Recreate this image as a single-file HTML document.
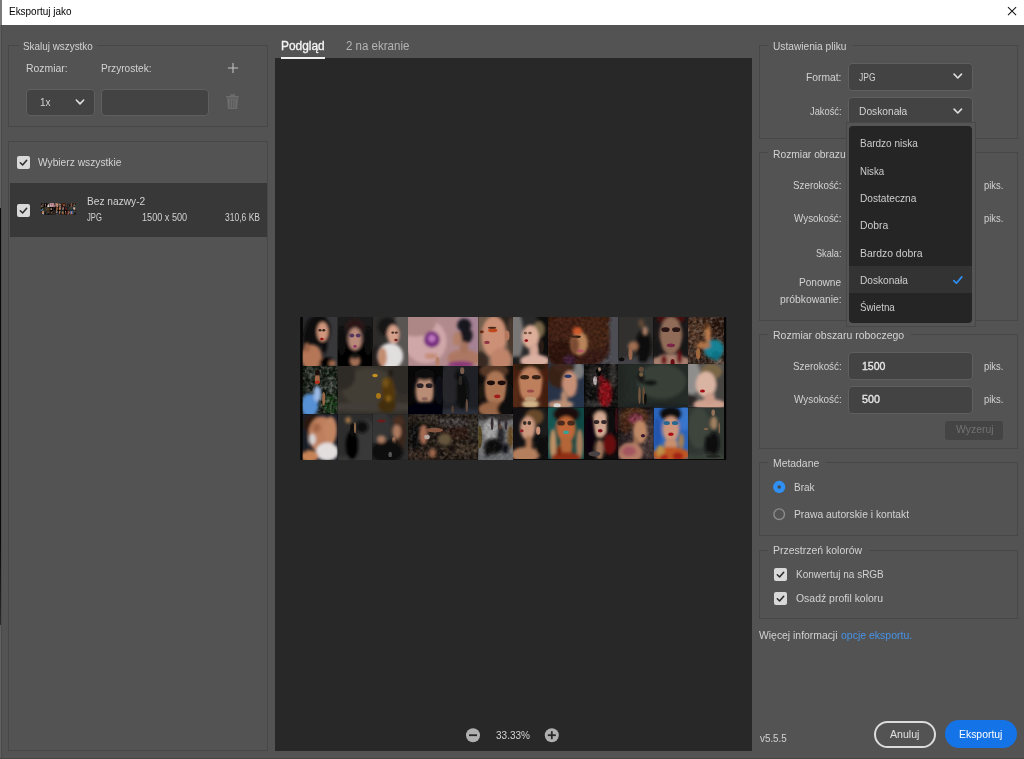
<!DOCTYPE html>
<html lang="pl">
<head>
<meta charset="utf-8">
<title>Eksportuj jako</title>
<style>
html,body{margin:0;padding:0;}
body{width:1024px;height:759px;overflow:hidden;background:#535353;position:relative;font-family:"Liberation Sans",sans-serif;}
.a{position:absolute;box-sizing:border-box;}
.t{position:absolute;white-space:pre;line-height:1;transform-origin:0 0;}
.sb{-webkit-text-stroke:0.35px currentColor;}
.fs{position:absolute;box-sizing:border-box;border:1px solid #474747;}
.gap{position:absolute;height:3px;background:#535353;}
.inp{position:absolute;box-sizing:border-box;background:#434343;border:1px solid #5f5f5f;border-radius:4px;}
.cb{position:absolute;width:13px;height:13px;background:#d9d9d9;border-radius:2px;}
.cb svg{position:absolute;left:0;top:0;}
svg{display:block;}
</style>
</head>
<body>
<!-- title bar -->
<div class="a" style="left:0;top:0;width:1024px;height:25px;background:#fff;"></div>
<div class="a" style="left:0;top:0;width:2px;height:25px;background:#7a7a7a;"></div>
<svg class="a" style="left:1004px;top:3px;" width="16" height="16" viewBox="0 0 16 16"><path d="M4 4.1 L12.1 12.2 M12.1 4.1 L4 12.2" stroke="#1a1a1a" stroke-width="1.1" fill="none"/></svg>
<!-- window edges -->
<div class="a" style="left:0;top:25px;width:1px;height:734px;background:#606060;"></div><div class="a" style="left:1px;top:25px;width:1px;height:734px;background:#4a4a4a;"></div>
<div class="a" style="left:0;top:208px;width:1px;height:417px;background:linear-gradient(#0a0a0a 0,#0a0a0a 80%,#2a2c28 100%);"></div>
<div class="a" style="left:0;top:758px;width:1024px;height:1px;background:#464646;"></div>

<!-- LEFT: Skaluj wszystko -->
<div class="fs" style="left:8px;top:45px;width:260px;height:82px;"></div>
<div class="gap" style="left:19px;top:44px;width:78px;"></div>
<svg class="a" style="left:227px;top:62px;" width="12" height="12" viewBox="0 0 12 12"><path d="M6 0.9 V11.1 M0.9 6 H11.1" stroke="#c4c4c4" stroke-width="1.05" fill="none"/></svg>
<div class="inp" style="left:26px;top:89px;width:69px;height:27px;"></div>
<svg class="a" style="left:74px;top:97px;" width="12" height="10" viewBox="0 0 12 10"><path d="M2.3 3 L6 6.9 L9.7 3" stroke="#dedede" stroke-width="1.6" fill="none" stroke-linecap="round" stroke-linejoin="round"/></svg>
<div class="inp" style="left:101px;top:89px;width:108px;height:27px;"></div>
<!-- trash -->
<svg class="a" style="left:225px;top:94px;" width="15" height="16" viewBox="0 0 15 16"><path d="M5.2 0.2h4.8v1.9h3.8v1.6H1.1V2.1h4.1z" fill="#6c6c6c"/><path d="M2 4.5h11.1l-1 10.4H3z" fill="#6c6c6c"/><path d="M5.3 5.6v8.4M7.55 5.6v8.4M9.8 5.6v8.4" stroke="#575757" stroke-width="0.8"/></svg>

<!-- LEFT: list -->
<div class="fs" style="left:8px;top:141px;width:260px;height:610px;"></div>
<div class="a" style="left:9.5px;top:183px;width:257px;height:54px;background:#383838;"></div>
<div class="cb" style="left:17px;top:156px;"><svg width="13" height="13" viewBox="0 0 13 13"><path d="M3.3 6.7 L5.6 9 L9.7 4.3" stroke="#2c2c2c" stroke-width="1.55" fill="none" stroke-linecap="round" stroke-linejoin="round"/></svg></div>
<div class="cb" style="left:17px;top:204px;"><svg width="13" height="13" viewBox="0 0 13 13"><path d="M3.3 6.7 L5.6 9 L9.7 4.3" stroke="#2c2c2c" stroke-width="1.55" fill="none" stroke-linecap="round" stroke-linejoin="round"/></svg></div>
<!-- thumbnail -->
<svg class="a" style="left:41px;top:203.3px;" width="35" height="11.6" viewBox="300.2 317 426 142.9" preserveAspectRatio="none"><use href="#cg"/></svg>

<!-- CENTER: preview -->
<div class="a" style="left:281px;top:57px;width:44px;height:2px;background:#f0f0f0;"></div>
<div class="a" style="left:275px;top:58px;width:477px;height:693px;background:#282828;"></div>
<div class="a" style="left:281px;top:57px;width:44px;height:2px;background:#f0f0f0;"></div>
<svg class="a" style="left:300px;top:316px;" width="428" height="146" viewBox="300 316 428 146">
<defs><filter id="bl" x="-20%" y="-20%" width="140%" height="140%"><feGaussianBlur stdDeviation="1.5"/></filter><filter id="bs" x="-20%" y="-20%" width="140%" height="140%"><feGaussianBlur stdDeviation="0.7"/></filter><filter id="tx" x="0" y="0" width="100%" height="100%"><feTurbulence type="fractalNoise" baseFrequency="0.32" numOctaves="2" seed="7"/><feColorMatrix type="matrix" values="0 0 0 0 0  0 0 0 0 0  0 0 0 0 0  2.6 0 0 0 -0.95"/></filter><filter id="tw" x="0" y="0" width="100%" height="100%"><feTurbulence type="fractalNoise" baseFrequency="0.3" numOctaves="2" seed="3"/><feColorMatrix type="matrix" values="0 0 0 0 1  0 0 0 0 0.9  0 0 0 0 0.8  0 2.4 0 0 -1.0"/></filter>
<clipPath id="c0"><rect x="302.6" y="317.0" width="35.1" height="48.9"/></clipPath>
<clipPath id="c1"><rect x="337.7" y="317.0" width="34.7" height="48.9"/></clipPath>
<clipPath id="c2"><rect x="372.4" y="317.0" width="35.7" height="48.9"/></clipPath>
<clipPath id="c3"><rect x="408.1" y="317.0" width="70.1" height="48.9"/></clipPath>
<clipPath id="c4"><rect x="478.2" y="317.0" width="34.8" height="48.9"/></clipPath>
<clipPath id="c5"><rect x="513.0" y="317.0" width="35.0" height="47.1"/></clipPath>
<clipPath id="c6"><rect x="548.0" y="317.0" width="70.1" height="47.1"/></clipPath>
<clipPath id="c7"><rect x="618.1" y="317.0" width="35.5" height="47.1"/></clipPath>
<clipPath id="c8"><rect x="653.6" y="317.0" width="34.5" height="47.1"/></clipPath>
<clipPath id="c9"><rect x="688.1" y="317.0" width="35.9" height="47.1"/></clipPath>
<clipPath id="c10"><rect x="302.6" y="365.9" width="35.1" height="48.2"/></clipPath>
<clipPath id="c11"><rect x="337.7" y="365.9" width="70.4" height="48.2"/></clipPath>
<clipPath id="c12"><rect x="408.1" y="365.9" width="34.5" height="48.2"/></clipPath>
<clipPath id="c13"><rect x="442.6" y="365.9" width="35.6" height="48.2"/></clipPath>
<clipPath id="c14"><rect x="478.2" y="365.9" width="34.8" height="48.2"/></clipPath>
<clipPath id="c15"><rect x="513.0" y="364.1" width="35.0" height="43.5"/></clipPath>
<clipPath id="c16"><rect x="548.0" y="364.1" width="36.3" height="43.5"/></clipPath>
<clipPath id="c17"><rect x="584.3" y="364.1" width="33.8" height="43.5"/></clipPath>
<clipPath id="c18"><rect x="618.1" y="364.1" width="70.0" height="43.5"/></clipPath>
<clipPath id="c19"><rect x="688.1" y="364.1" width="35.9" height="43.5"/></clipPath>
<clipPath id="c20"><rect x="302.6" y="414.1" width="35.1" height="45.8"/></clipPath>
<clipPath id="c21"><rect x="337.7" y="414.1" width="34.7" height="45.8"/></clipPath>
<clipPath id="c22"><rect x="372.4" y="414.1" width="35.7" height="45.8"/></clipPath>
<clipPath id="c23"><rect x="408.1" y="414.1" width="70.1" height="45.8"/></clipPath>
<clipPath id="c24"><rect x="478.2" y="414.1" width="34.8" height="45.8"/></clipPath>
<clipPath id="c25"><rect x="513.0" y="407.6" width="35.0" height="51.3"/></clipPath>
<clipPath id="c26"><rect x="548.0" y="407.6" width="36.3" height="51.3"/></clipPath>
<clipPath id="c27"><rect x="584.3" y="407.6" width="33.8" height="51.3"/></clipPath>
<clipPath id="c28"><rect x="618.1" y="407.6" width="35.5" height="51.3"/></clipPath>
<clipPath id="c29"><rect x="653.6" y="407.6" width="34.5" height="51.3"/></clipPath>
<clipPath id="c30"><rect x="688.1" y="407.6" width="35.9" height="51.3"/></clipPath>
</defs>
<g id="cg">
<rect x="300.2" y="317" width="426" height="142.9" fill="#050505"/>
<g clip-path="url(#c0)"><rect x="302.6" y="317.0" width="35.1" height="48.9" fill="#28282a"/>
<g filter="url(#bl)">
<ellipse cx="335.9" cy="341.4" rx="12.3" ry="34.2" fill="#38383b"/>
<ellipse cx="318.4" cy="330.2" rx="12.6" ry="15.6" fill="#0b090a"/>
<ellipse cx="307.9" cy="341.4" rx="4.9" ry="15.6" fill="#0b0a0b"/>
<ellipse cx="324.4" cy="343.9" rx="3.5" ry="9.8" fill="#0c0b0b"/>
<ellipse cx="322.6" cy="331.7" rx="5.6" ry="9.8" fill="#d0977d"/>
</g>
<g filter="url(#bs)">
<ellipse cx="321.9" cy="339.0" rx="1.8" ry="1.2" fill="#991411"/>
<ellipse cx="320.0" cy="330.2" rx="1.5" ry="1.2" fill="#382520"/>
<ellipse cx="323.8" cy="330.2" rx="1.5" ry="1.2" fill="#382520"/>
</g>
<g filter="url(#bl)">
<ellipse cx="311.4" cy="357.1" rx="10.5" ry="12.7" fill="#b47657"/>
<ellipse cx="306.8" cy="347.3" rx="3.2" ry="4.9" fill="#996246"/>
<ellipse cx="327.2" cy="362.5" rx="7.7" ry="4.9" fill="#060606"/>
<ellipse cx="332.4" cy="363.5" rx="3.5" ry="2.9" fill="#a26a4d"/>
</g>
</g>
<g clip-path="url(#c1)"><rect x="337.7" y="317.0" width="34.7" height="48.9" fill="#1c1b1b"/>
<g filter="url(#bl)">
<ellipse cx="355.0" cy="326.8" rx="9.4" ry="8.3" fill="#2a1914"/>
<ellipse cx="355.0" cy="358.6" rx="20.8" ry="17.6" fill="#060606"/>
<ellipse cx="341.9" cy="341.4" rx="4.9" ry="14.7" fill="#070707"/>
<ellipse cx="368.2" cy="341.4" rx="4.9" ry="14.7" fill="#070707"/>
<ellipse cx="355.0" cy="339.0" rx="6.9" ry="11.2" fill="#b98a79"/>
</g>
<g filter="url(#bs)">
<ellipse cx="351.8" cy="335.6" rx="2.5" ry="2.0" fill="#57385d"/>
<ellipse cx="358.3" cy="335.6" rx="2.5" ry="2.0" fill="#57385d"/>
<ellipse cx="355.0" cy="346.3" rx="1.7" ry="1.5" fill="#903766"/>
</g>
<g filter="url(#bl)">
<ellipse cx="355.0" cy="361.0" rx="5.6" ry="5.9" fill="#a26e55"/>
<ellipse cx="355.0" cy="356.1" rx="4.5" ry="2.9" fill="#141414"/>
</g>
</g>
<g clip-path="url(#c2)"><rect x="372.4" y="317.0" width="35.7" height="48.9" fill="#2d2c2b"/>
<g filter="url(#bl)">
<ellipse cx="408.1" cy="341.4" rx="16.1" ry="39.1" fill="#595552"/>
<ellipse cx="376.0" cy="361.0" rx="10.7" ry="14.7" fill="#201e1d"/>
<ellipse cx="387.4" cy="326.8" rx="9.6" ry="9.8" fill="#171514"/>
<ellipse cx="393.1" cy="334.6" rx="6.1" ry="9.8" fill="#d5a08a"/>
</g>
<g filter="url(#bs)">
<ellipse cx="396.0" cy="340.0" rx="1.8" ry="1.2" fill="#792828"/>
<ellipse cx="392.8" cy="332.6" rx="1.4" ry="1.2" fill="#482f28"/>
<ellipse cx="396.3" cy="332.6" rx="1.4" ry="1.2" fill="#482f28"/>
</g>
<g filter="url(#bl)">
<ellipse cx="390.2" cy="356.1" rx="12.9" ry="13.2" fill="#e1dede"/>
<ellipse cx="382.4" cy="357.1" rx="4.6" ry="9.8" fill="#c28c70"/>
</g>
</g>
<g clip-path="url(#c3)"><rect x="408.1" y="317.0" width="70.1" height="48.9" fill="#b18a8e"/>
<g filter="url(#bl)">
<ellipse cx="425.6" cy="341.4" rx="21.0" ry="22.0" fill="#d0a7a9"/>
<ellipse cx="471.2" cy="331.7" rx="14.0" ry="24.4" fill="#a58294"/>
<ellipse cx="415.1" cy="321.9" rx="21.0" ry="14.7" fill="#ad8686"/>
<ellipse cx="431.9" cy="339.5" rx="8.1" ry="8.3" fill="#76297e"/>
<ellipse cx="431.9" cy="338.5" rx="3.5" ry="3.4" fill="#bd78c1"/>
<ellipse cx="431.2" cy="356.1" rx="7.0" ry="2.9" fill="#c48c76"/>
</g>
<g filter="url(#bs)">
<ellipse cx="437.5" cy="362.0" rx="2.1" ry="4.9" fill="#b5806b"/>
</g>
<g filter="url(#bl)">
<ellipse cx="464.2" cy="325.3" rx="7.0" ry="6.8" fill="#19171d"/>
<ellipse cx="466.3" cy="335.6" rx="6.3" ry="7.8" fill="#17151b"/>
<ellipse cx="457.2" cy="339.0" rx="4.6" ry="7.3" fill="#b28069"/>
<ellipse cx="464.2" cy="358.1" rx="16.8" ry="8.8" fill="#ad7863"/>
<ellipse cx="464.2" cy="347.3" rx="4.2" ry="5.9" fill="#a5725b"/>
<ellipse cx="460.7" cy="364.4" rx="12.6" ry="3.4" fill="#8a3878"/>
</g>
</g>
<g clip-path="url(#c4)"><rect x="478.2" y="317.0" width="34.8" height="48.9" fill="#725d4c"/>
<g filter="url(#bl)">
<ellipse cx="506.0" cy="321.9" rx="12.2" ry="9.8" fill="#2a211c"/>
<ellipse cx="511.3" cy="336.6" rx="4.2" ry="19.6" fill="#48382d"/>
<ellipse cx="479.9" cy="361.0" rx="8.7" ry="9.8" fill="#382a21"/>
<ellipse cx="493.9" cy="336.6" rx="12.5" ry="20.5" fill="#cc9076"/>
<ellipse cx="500.8" cy="360.0" rx="10.4" ry="12.2" fill="#bf846a"/>
</g>
<g filter="url(#bs)">
<ellipse cx="492.8" cy="330.2" rx="4.5" ry="2.0" fill="#be4a1b"/>
<ellipse cx="492.1" cy="327.8" rx="4.2" ry="1.0" fill="#482a1c"/>
<ellipse cx="481.7" cy="331.7" rx="2.1" ry="1.5" fill="#682c14"/>
<ellipse cx="486.9" cy="342.4" rx="2.8" ry="1.7" fill="#903746"/>
<ellipse cx="507.1" cy="335.6" rx="2.4" ry="4.9" fill="#b4765d"/>
</g>
</g>
<g clip-path="url(#c5)"><rect x="513.0" y="317.0" width="35.0" height="47.1" fill="#2a2a2a"/>
<g filter="url(#bl)">
<ellipse cx="513.0" cy="335.8" rx="10.5" ry="28.3" fill="#797676"/>
<ellipse cx="546.2" cy="335.8" rx="10.5" ry="33.0" fill="#0e0e0e"/>
<ellipse cx="516.5" cy="363.2" rx="10.5" ry="7.1" fill="#1c1c1c"/>
<ellipse cx="538.5" cy="329.7" rx="5.6" ry="8.0" fill="#796848"/>
<ellipse cx="530.5" cy="336.8" rx="8.4" ry="11.8" fill="#dcae99"/>
</g>
<g filter="url(#bs)">
<ellipse cx="526.3" cy="340.6" rx="1.8" ry="1.4" fill="#900e14"/>
<ellipse cx="525.4" cy="333.0" rx="1.8" ry="1.2" fill="#795746"/>
<ellipse cx="530.0" cy="333.0" rx="1.8" ry="1.2" fill="#795746"/>
</g>
<g filter="url(#bl)">
<ellipse cx="534.0" cy="350.9" rx="4.9" ry="7.5" fill="#d5a797"/>
<ellipse cx="534.7" cy="360.8" rx="14.7" ry="6.6" fill="#dab0a2"/>
</g>
<g filter="url(#bs)">
<ellipse cx="541.7" cy="346.2" rx="2.1" ry="7.1" fill="#2a1e14"/>
</g>
</g>
<g clip-path="url(#c6)"><rect x="548.0" y="317.0" width="70.1" height="47.1" fill="#4e4e55"/>
<g filter="url(#bl)">
<ellipse cx="555.0" cy="326.4" rx="21.0" ry="18.8" fill="#3a1c11"/>
<ellipse cx="577.4" cy="340.6" rx="35.1" ry="29.2" fill="#3e1e12"/>
<ellipse cx="583.0" cy="319.4" rx="28.0" ry="7.1" fill="#42200f"/>
<ellipse cx="569.0" cy="331.1" rx="21.0" ry="16.5" fill="#462216"/>
<ellipse cx="593.6" cy="333.5" rx="17.5" ry="16.5" fill="#4a2618"/>
<ellipse cx="562.0" cy="354.7" rx="14.0" ry="14.1" fill="#321810"/>
<ellipse cx="569.0" cy="360.3" rx="5.6" ry="4.7" fill="#4a2040"/>
</g>
<rect x="548.0" y="317.0" width="70.1" height="47.1" filter="url(#tx)" opacity="0.32"/>
<rect x="548.0" y="317.0" width="70.1" height="47.1" filter="url(#tw)" opacity="0.04"/>
<g filter="url(#bl)">
<ellipse cx="615.3" cy="340.6" rx="5.6" ry="28.3" fill="#4e4e55"/>
<ellipse cx="579.5" cy="343.4" rx="8.4" ry="11.8" fill="#b8845c"/>
<ellipse cx="577.4" cy="331.1" rx="4.9" ry="4.2" fill="#cc5a2c"/>
</g>
<g filter="url(#bs)">
<ellipse cx="576.0" cy="336.8" rx="4.9" ry="1.4" fill="#2a1810"/>
<ellipse cx="580.2" cy="350.9" rx="3.5" ry="1.6" fill="#b85868"/>
</g>
<g filter="url(#bl)">
<ellipse cx="574.6" cy="345.3" rx="4.2" ry="8.5" fill="#7a4a30"/>
</g>
</g>
<g clip-path="url(#c7)"><rect x="618.1" y="317.0" width="35.5" height="47.1" fill="#31302e"/>
<g filter="url(#bl)">
<ellipse cx="635.9" cy="364.1" rx="24.8" ry="6.6" fill="#424246"/>
<ellipse cx="643.7" cy="345.3" rx="7.8" ry="15.1" fill="#080808"/>
<ellipse cx="643.0" cy="359.4" rx="5.3" ry="3.8" fill="#0f0d0b"/>
<ellipse cx="633.0" cy="346.2" rx="5.0" ry="4.7" fill="#a06e53"/>
</g>
<g filter="url(#bs)">
<ellipse cx="630.5" cy="353.7" rx="2.1" ry="6.6" fill="#97654d"/>
<ellipse cx="621.6" cy="359.4" rx="2.8" ry="1.9" fill="#0f0f0f"/>
</g>
<g filter="url(#bl)">
<ellipse cx="641.2" cy="323.1" rx="2.8" ry="4.2" fill="#5f4636"/>
<ellipse cx="645.1" cy="331.1" rx="2.8" ry="4.7" fill="#a87e65"/>
</g>
</g>
<g clip-path="url(#c8)"><rect x="653.6" y="317.0" width="34.5" height="47.1" fill="#1b1617"/>
<g filter="url(#bl)">
<ellipse cx="670.9" cy="318.4" rx="13.8" ry="5.7" fill="#48100e"/>
<ellipse cx="670.9" cy="335.8" rx="11.4" ry="18.8" fill="#906c59"/>
</g>
<g filter="url(#bs)">
<ellipse cx="665.5" cy="329.7" rx="4.1" ry="2.4" fill="#2a1614"/>
<ellipse cx="676.2" cy="329.7" rx="4.1" ry="2.4" fill="#2a1614"/>
<ellipse cx="670.9" cy="345.3" rx="4.1" ry="1.9" fill="#792846"/>
</g>
<g filter="url(#bl)">
<ellipse cx="670.9" cy="361.7" rx="19.0" ry="8.0" fill="#a77f6e"/>
<ellipse cx="679.5" cy="357.0" rx="2.8" ry="7.1" fill="#681113"/>
<ellipse cx="664.0" cy="360.3" rx="2.8" ry="4.7" fill="#681113"/>
</g>
<g filter="url(#bs)">
<ellipse cx="672.6" cy="362.7" rx="2.1" ry="3.8" fill="#681113"/>
</g>
<g filter="url(#bl)">
<ellipse cx="656.4" cy="347.6" rx="4.1" ry="9.4" fill="#171416"/>
<ellipse cx="685.3" cy="347.6" rx="3.5" ry="9.4" fill="#171416"/>
</g>
</g>
<g clip-path="url(#c9)"><rect x="688.1" y="317.0" width="35.9" height="47.1" fill="#3e261b"/>
<g filter="url(#bl)">
<ellipse cx="695.3" cy="331.1" rx="9.0" ry="14.1" fill="#573828"/>
<ellipse cx="716.8" cy="324.1" rx="10.8" ry="7.1" fill="#2a1911"/>
<ellipse cx="693.5" cy="354.7" rx="7.2" ry="9.4" fill="#4b3325"/>
<ellipse cx="706.0" cy="361.7" rx="17.9" ry="3.8" fill="#38251b"/>
<ellipse cx="718.6" cy="361.7" rx="5.4" ry="3.3" fill="#796255"/>
</g>
<rect x="688.1" y="317.0" width="35.9" height="47.1" filter="url(#tx)" opacity="0.55"/>
<rect x="688.1" y="317.0" width="35.9" height="47.1" filter="url(#tw)" opacity="0.25"/>
<g filter="url(#bl)">
<ellipse cx="713.9" cy="349.0" rx="10.1" ry="9.4" fill="#138294"/>
<ellipse cx="716.1" cy="355.6" rx="4.3" ry="4.7" fill="#107283"/>
<ellipse cx="707.8" cy="333.5" rx="3.2" ry="9.4" fill="#b97b4d"/>
<ellipse cx="703.2" cy="345.3" rx="7.2" ry="3.3" fill="#b47446"/>
</g>
<g filter="url(#bs)">
<ellipse cx="698.2" cy="353.7" rx="2.2" ry="5.7" fill="#a2683e"/>
</g>
<g filter="url(#bl)">
<ellipse cx="706.0" cy="325.5" rx="2.9" ry="3.3" fill="#57331b"/>
</g>
</g>
<g clip-path="url(#c10)"><rect x="302.6" y="365.9" width="35.1" height="48.2" fill="#111910"/>
<g filter="url(#bl)">
<ellipse cx="313.1" cy="373.1" rx="8.8" ry="5.8" fill="#2d382d"/>
<ellipse cx="330.7" cy="385.2" rx="5.3" ry="7.2" fill="#37423a"/>
<ellipse cx="307.9" cy="387.6" rx="4.2" ry="4.8" fill="#252d26"/>
<ellipse cx="330.7" cy="404.5" rx="7.7" ry="10.6" fill="#193816"/>
<ellipse cx="328.9" cy="373.1" rx="7.0" ry="5.8" fill="#172313"/>
</g>
<rect x="302.6" y="365.9" width="35.1" height="48.2" filter="url(#tx)" opacity="0.6"/>
<rect x="302.6" y="365.9" width="35.1" height="48.2" filter="url(#tw)" opacity="0.3"/>
<g filter="url(#bl)">
<ellipse cx="309.6" cy="405.4" rx="8.8" ry="11.6" fill="#5790d5"/>
<ellipse cx="317.3" cy="393.9" rx="3.9" ry="8.2" fill="#99b9e6"/>
</g>
<g filter="url(#bs)">
<ellipse cx="317.3" cy="379.4" rx="2.5" ry="4.8" fill="#a26848"/>
<ellipse cx="317.3" cy="382.3" rx="2.5" ry="1.7" fill="#b42f1c"/>
<ellipse cx="323.7" cy="398.7" rx="1.6" ry="6.7" fill="#996646"/>
<ellipse cx="317.3" cy="372.6" rx="2.5" ry="2.9" fill="#1c110b"/>
</g>
</g>
<g clip-path="url(#c11)"><rect x="337.7" y="365.9" width="70.4" height="48.2" fill="#35312b"/>
<g filter="url(#bl)">
<ellipse cx="369.4" cy="387.6" rx="28.2" ry="19.3" fill="#423c34"/>
<ellipse cx="372.9" cy="406.9" rx="49.3" ry="4.8" fill="#433e38"/>
<ellipse cx="341.2" cy="375.5" rx="14.1" ry="14.5" fill="#2e2a25"/>
<ellipse cx="404.6" cy="375.5" rx="14.1" ry="19.3" fill="#2f2b26"/>
<ellipse cx="388.4" cy="394.8" rx="7.0" ry="17.4" fill="#53370f"/>
<ellipse cx="387.0" cy="405.4" rx="9.2" ry="6.7" fill="#432e0b"/>
<ellipse cx="390.5" cy="373.1" rx="2.8" ry="3.9" fill="#241b14"/>
</g>
<g filter="url(#bs)">
<ellipse cx="375.0" cy="375.5" rx="2.8" ry="1.7" fill="#c49024"/>
<ellipse cx="378.5" cy="395.8" rx="2.5" ry="2.9" fill="#ab7717"/>
</g>
<g filter="url(#bl)">
<ellipse cx="385.6" cy="382.8" rx="3.5" ry="4.8" fill="#735112"/>
<ellipse cx="388.4" cy="398.7" rx="2.8" ry="3.4" fill="#835d12"/>
</g>
</g>
<g clip-path="url(#c12)"><rect x="408.1" y="365.9" width="34.5" height="48.2" fill="#070708"/>
<g filter="url(#bl)">
<ellipse cx="424.7" cy="391.0" rx="9.3" ry="15.4" fill="#b98c74"/>
<ellipse cx="424.7" cy="374.6" rx="10.3" ry="5.8" fill="#0b0a0b"/>
</g>
<g filter="url(#bs)">
<ellipse cx="420.1" cy="385.7" rx="3.5" ry="2.4" fill="#2a2325"/>
<ellipse cx="429.2" cy="385.7" rx="3.5" ry="2.4" fill="#2a2325"/>
<ellipse cx="424.7" cy="398.7" rx="3.1" ry="1.7" fill="#90665d"/>
</g>
<g filter="url(#bl)">
<ellipse cx="425.4" cy="411.7" rx="20.7" ry="9.6" fill="#060607"/>
<ellipse cx="439.2" cy="390.0" rx="4.1" ry="14.5" fill="#101013"/>
</g>
</g>
<g clip-path="url(#c13)"><rect x="442.6" y="365.9" width="35.6" height="48.2" fill="#1e2025"/>
<g filter="url(#bl)">
<ellipse cx="449.7" cy="385.2" rx="8.9" ry="19.3" fill="#25262c"/>
<ellipse cx="460.4" cy="413.1" rx="24.9" ry="4.8" fill="#2a2d37"/>
<ellipse cx="462.2" cy="392.4" rx="6.1" ry="17.4" fill="#070708"/>
<ellipse cx="457.6" cy="375.5" rx="2.8" ry="5.8" fill="#09090a"/>
</g>
<g filter="url(#bs)">
<ellipse cx="462.2" cy="370.7" rx="2.1" ry="3.4" fill="#795d4d"/>
<ellipse cx="460.4" cy="380.4" rx="1.8" ry="4.8" fill="#2a2826"/>
<ellipse cx="466.8" cy="405.4" rx="1.2" ry="6.7" fill="#684f40"/>
<ellipse cx="452.6" cy="409.3" rx="1.1" ry="3.9" fill="#574235"/>
</g>
</g>
<g clip-path="url(#c14)"><rect x="478.2" y="365.9" width="34.8" height="48.2" fill="#0e0b0b"/>
<g filter="url(#bl)">
<ellipse cx="493.9" cy="370.7" rx="14.6" ry="7.7" fill="#573825"/>
<ellipse cx="495.6" cy="388.6" rx="11.5" ry="17.4" fill="#ac7655"/>
</g>
<g filter="url(#bs)">
<ellipse cx="490.9" cy="382.8" rx="4.1" ry="2.4" fill="#1c100b"/>
<ellipse cx="501.7" cy="382.8" rx="4.1" ry="2.4" fill="#1c100b"/>
<ellipse cx="497.3" cy="396.3" rx="3.1" ry="1.9" fill="#a21c1c"/>
</g>
<g filter="url(#bl)">
<ellipse cx="492.1" cy="409.3" rx="13.9" ry="7.7" fill="#996646"/>
<ellipse cx="510.2" cy="399.6" rx="4.2" ry="16.9" fill="#070707"/>
<ellipse cx="504.3" cy="409.3" rx="7.0" ry="7.2" fill="#090909"/>
<ellipse cx="481.0" cy="392.4" rx="2.8" ry="9.6" fill="#1c130e"/>
</g>
</g>
<g clip-path="url(#c15)"><rect x="513.0" y="364.1" width="35.0" height="43.5" fill="#482011"/>
<g filter="url(#bl)">
<ellipse cx="530.5" cy="367.1" rx="15.8" ry="4.4" fill="#2a1c11"/>
<ellipse cx="530.5" cy="384.5" rx="12.6" ry="17.4" fill="#be7f5d"/>
</g>
<g filter="url(#bs)">
<ellipse cx="524.7" cy="377.2" rx="4.4" ry="2.2" fill="#382114"/>
<ellipse cx="536.3" cy="377.2" rx="4.4" ry="2.2" fill="#382114"/>
<ellipse cx="530.5" cy="391.1" rx="3.5" ry="1.5" fill="#994646"/>
</g>
<g filter="url(#bl)">
<ellipse cx="515.8" cy="394.6" rx="3.5" ry="15.2" fill="#572a16"/>
<ellipse cx="545.5" cy="394.6" rx="3.5" ry="15.2" fill="#421b10"/>
<ellipse cx="530.5" cy="404.1" rx="8.8" ry="4.4" fill="#d0b488"/>
</g>
<g filter="url(#bs)">
<ellipse cx="530.5" cy="398.9" rx="5.6" ry="2.2" fill="#be9976"/>
</g>
</g>
<g clip-path="url(#c16)"><rect x="548.0" y="364.1" width="36.3" height="43.5" fill="#283348"/>
<g filter="url(#bl)">
<ellipse cx="578.9" cy="370.6" rx="5.4" ry="8.7" fill="#7d7d7d"/>
<ellipse cx="573.4" cy="401.1" rx="14.5" ry="8.7" fill="#25354b"/>
<ellipse cx="559.6" cy="375.0" rx="12.7" ry="13.0" fill="#382316"/>
<ellipse cx="564.3" cy="367.6" rx="10.9" ry="4.4" fill="#40281c"/>
<ellipse cx="569.8" cy="383.7" rx="7.6" ry="13.0" fill="#c79076"/>
</g>
<g filter="url(#bs)">
<ellipse cx="568.0" cy="376.3" rx="3.6" ry="1.7" fill="#2a3868"/>
</g>
<g filter="url(#bl)">
<ellipse cx="564.3" cy="396.7" rx="3.6" ry="6.5" fill="#b4886e"/>
<ellipse cx="560.7" cy="404.6" rx="12.7" ry="4.4" fill="#be9076"/>
</g>
<g filter="url(#bs)">
<ellipse cx="557.1" cy="405.4" rx="3.6" ry="2.2" fill="#dad5d0"/>
</g>
</g>
<g clip-path="url(#c17)"><rect x="584.3" y="364.1" width="33.8" height="43.5" fill="#100f0f"/>
<g filter="url(#bl)">
<ellipse cx="594.4" cy="377.2" rx="6.8" ry="10.9" fill="#2a2626"/>
<ellipse cx="613.0" cy="375.0" rx="3.4" ry="13.0" fill="#383533"/>
<ellipse cx="594.4" cy="404.1" rx="10.1" ry="2.6" fill="#383737"/>
<ellipse cx="587.7" cy="390.2" rx="3.4" ry="13.0" fill="#0a0909"/>
<ellipse cx="605.3" cy="393.7" rx="6.8" ry="13.9" fill="#901117"/>
<ellipse cx="601.2" cy="379.3" rx="2.7" ry="4.4" fill="#790e14"/>
</g>
<g filter="url(#bs)">
<ellipse cx="598.5" cy="371.9" rx="2.4" ry="4.4" fill="#060606"/>
<ellipse cx="595.1" cy="380.6" rx="2.0" ry="4.4" fill="#beb4b4"/>
<ellipse cx="599.5" cy="369.3" rx="1.4" ry="2.2" fill="#ab8876"/>
</g>
<rect x="584.3" y="364.1" width="33.8" height="43.5" filter="url(#tx)" opacity="0.35"/>
<rect x="584.3" y="364.1" width="33.8" height="43.5" filter="url(#tw)" opacity="0.12"/>
</g>
<g clip-path="url(#c18)"><rect x="618.1" y="364.1" width="70.0" height="43.5" fill="#252c27"/>
<g filter="url(#bl)">
<ellipse cx="661.5" cy="381.5" rx="24.5" ry="17.4" fill="#374139"/>
<ellipse cx="653.1" cy="407.6" rx="56.0" ry="4.4" fill="#1e2420"/>
<ellipse cx="619.5" cy="385.9" rx="7.0" ry="26.1" fill="#212622"/>
<ellipse cx="641.2" cy="378.0" rx="3.5" ry="5.7" fill="#161612"/>
<ellipse cx="650.3" cy="382.8" rx="7.0" ry="2.6" fill="#090909"/>
</g>
<g filter="url(#bs)">
<ellipse cx="641.2" cy="369.3" rx="2.5" ry="2.6" fill="#634939"/>
<ellipse cx="639.5" cy="395.4" rx="1.3" ry="8.7" fill="#73553f"/>
<ellipse cx="643.6" cy="395.4" rx="1.3" ry="8.7" fill="#694d37"/>
<ellipse cx="641.2" cy="374.5" rx="2.1" ry="2.2" fill="#735d41"/>
<ellipse cx="645.4" cy="398.9" rx="1.4" ry="5.7" fill="#0f0f0f"/>
</g>
</g>
<g clip-path="url(#c19)"><rect x="688.1" y="364.1" width="35.9" height="43.5" fill="#575553"/>
<g filter="url(#bl)">
<ellipse cx="691.7" cy="377.2" rx="9.0" ry="17.4" fill="#908e8c"/>
<ellipse cx="722.2" cy="390.2" rx="7.2" ry="21.8" fill="#464442"/>
<ellipse cx="689.9" cy="401.1" rx="7.2" ry="6.5" fill="#2a2826"/>
<ellipse cx="711.4" cy="371.5" rx="10.8" ry="7.8" fill="#796646"/>
<ellipse cx="706.0" cy="384.5" rx="10.1" ry="13.0" fill="#dab4a2"/>
</g>
<g filter="url(#bs)">
<ellipse cx="702.5" cy="391.1" rx="2.5" ry="1.5" fill="#a20e14"/>
</g>
<g filter="url(#bl)">
<ellipse cx="709.6" cy="404.6" rx="16.2" ry="5.7" fill="#d0a290"/>
<ellipse cx="709.6" cy="398.0" rx="5.4" ry="5.2" fill="#cc9b8a"/>
</g>
</g>
<g clip-path="url(#c20)"><rect x="302.6" y="414.1" width="35.1" height="45.8" fill="#1b1e28"/>
<g filter="url(#bl)">
<ellipse cx="313.1" cy="424.2" rx="9.5" ry="9.2" fill="#2a170e"/>
<ellipse cx="321.9" cy="434.7" rx="13.3" ry="18.3" fill="#be7f5d"/>
<ellipse cx="330.7" cy="430.1" rx="6.3" ry="13.7" fill="#c28562"/>
<ellipse cx="316.6" cy="427.8" rx="4.2" ry="4.6" fill="#a26646"/>
<ellipse cx="327.2" cy="451.7" rx="11.2" ry="9.2" fill="#e3dede"/>
<ellipse cx="312.4" cy="439.3" rx="3.5" ry="5.5" fill="#d5d0d0"/>
<ellipse cx="309.6" cy="456.2" rx="8.8" ry="6.0" fill="#c78355"/>
<ellipse cx="305.4" cy="441.6" rx="2.8" ry="11.4" fill="#191c25"/>
</g>
</g>
<g clip-path="url(#c21)"><rect x="337.7" y="414.1" width="34.7" height="45.8" fill="#2d2d2d"/>
<g filter="url(#bl)">
<ellipse cx="365.5" cy="441.6" rx="10.4" ry="22.9" fill="#373737"/>
<ellipse cx="355.0" cy="459.9" rx="24.3" ry="3.7" fill="#383838"/>
<ellipse cx="352.3" cy="445.2" rx="6.6" ry="14.7" fill="#050505"/>
</g>
<g filter="url(#bs)">
<ellipse cx="352.3" cy="430.1" rx="2.4" ry="6.9" fill="#0b0a09"/>
</g>
<g filter="url(#bl)">
<ellipse cx="362.0" cy="426.9" rx="6.2" ry="6.0" fill="#0d0d0d"/>
<ellipse cx="348.1" cy="420.1" rx="2.8" ry="3.2" fill="#a27646"/>
</g>
<g filter="url(#bs)">
<ellipse cx="355.0" cy="427.8" rx="1.0" ry="5.5" fill="#906a4a"/>
</g>
</g>
<g clip-path="url(#c22)"><rect x="372.4" y="414.1" width="35.7" height="45.8" fill="#2d2d2d"/>
<g filter="url(#bl)">
<ellipse cx="379.5" cy="427.8" rx="10.7" ry="18.3" fill="#353535"/>
<ellipse cx="400.2" cy="432.4" rx="6.1" ry="18.3" fill="#38251b"/>
<ellipse cx="396.7" cy="431.5" rx="4.3" ry="7.3" fill="#ab795f"/>
<ellipse cx="398.1" cy="421.0" rx="5.4" ry="4.6" fill="#482f21"/>
</g>
<g filter="url(#bs)">
<ellipse cx="393.8" cy="441.6" rx="1.8" ry="4.6" fill="#a27255"/>
</g>
<g filter="url(#bl)">
<ellipse cx="386.7" cy="451.7" rx="16.1" ry="11.4" fill="#0a0a0a"/>
<ellipse cx="381.3" cy="439.3" rx="4.3" ry="3.7" fill="#ab7b62"/>
</g>
<g filter="url(#bs)">
<ellipse cx="390.2" cy="454.4" rx="1.8" ry="2.7" fill="#575757"/>
<ellipse cx="381.3" cy="421.0" rx="4.3" ry="1.4" fill="#681c1c"/>
</g>
</g>
<g clip-path="url(#c23)"><rect x="408.1" y="414.1" width="70.1" height="45.8" fill="#241b15"/>
<g filter="url(#bl)">
<ellipse cx="453.7" cy="422.3" rx="15.4" ry="4.6" fill="#4a4242"/>
<ellipse cx="457.2" cy="433.3" rx="17.5" ry="6.9" fill="#301d17"/>
<ellipse cx="460.7" cy="449.8" rx="19.6" ry="5.5" fill="#46382a"/>
<ellipse cx="418.6" cy="455.3" rx="14.0" ry="5.5" fill="#3a2c21"/>
<ellipse cx="474.7" cy="427.8" rx="5.6" ry="13.7" fill="#362e28"/>
<ellipse cx="429.1" cy="418.7" rx="14.0" ry="4.6" fill="#3a302c"/>
<ellipse cx="415.1" cy="437.0" rx="7.0" ry="13.7" fill="#100c0a"/>
<ellipse cx="422.1" cy="423.3" rx="5.6" ry="3.7" fill="#171210"/>
</g>
<rect x="408.1" y="414.1" width="70.1" height="45.8" filter="url(#tx)" opacity="0.6"/>
<rect x="408.1" y="414.1" width="70.1" height="45.8" filter="url(#tw)" opacity="0.16"/>
<g filter="url(#bl)">
<ellipse cx="423.5" cy="434.7" rx="4.2" ry="10.1" fill="#a56b53"/>
</g>
<g filter="url(#bs)">
<ellipse cx="434.7" cy="430.1" rx="8.4" ry="2.3" fill="#865740"/>
<ellipse cx="427.0" cy="437.0" rx="2.8" ry="2.3" fill="#b5a7a0"/>
</g>
<g filter="url(#bl)">
<ellipse cx="444.6" cy="439.3" rx="7.0" ry="6.0" fill="#65553c"/>
<ellipse cx="432.6" cy="453.0" rx="3.5" ry="4.6" fill="#9c654b"/>
<ellipse cx="451.6" cy="448.4" rx="4.2" ry="3.7" fill="#13100c"/>
</g>
</g>
<g clip-path="url(#c24)"><rect x="478.2" y="414.1" width="34.8" height="45.8" fill="#79797b"/>
<g filter="url(#bl)">
<ellipse cx="495.6" cy="416.4" rx="20.9" ry="5.5" fill="#2d2a2c"/>
<ellipse cx="492.1" cy="430.1" rx="8.7" ry="11.4" fill="#a7a7a7"/>
<ellipse cx="495.6" cy="457.6" rx="20.9" ry="5.5" fill="#6c6e72"/>
</g>
<g filter="url(#bs)">
<ellipse cx="479.6" cy="437.0" rx="2.4" ry="11.4" fill="#574821"/>
</g>
<g filter="url(#bl)">
<ellipse cx="510.6" cy="437.0" rx="2.8" ry="11.4" fill="#68481b"/>
</g>
<g filter="url(#bs)">
<ellipse cx="492.1" cy="423.3" rx="1.4" ry="6.9" fill="#382d35"/>
<ellipse cx="499.1" cy="423.3" rx="1.4" ry="6.9" fill="#382d35"/>
<ellipse cx="506.0" cy="423.3" rx="1.4" ry="6.9" fill="#382d35"/>
</g>
<g filter="url(#bl)">
<ellipse cx="493.9" cy="446.2" rx="9.7" ry="7.8" fill="#0b0b0d"/>
<ellipse cx="487.6" cy="450.7" rx="3.1" ry="6.0" fill="#09090a"/>
<ellipse cx="500.8" cy="435.6" rx="3.5" ry="9.2" fill="#1c1e21"/>
</g>
<g filter="url(#bs)">
<ellipse cx="499.8" cy="426.9" rx="1.7" ry="2.7" fill="#574237"/>
</g>
<g filter="url(#bl)">
<ellipse cx="505.3" cy="448.4" rx="3.5" ry="5.5" fill="#111114"/>
</g>
<rect x="478.2" y="414.1" width="34.8" height="45.8" filter="url(#tx)" opacity="0.15"/>
<rect x="478.2" y="414.1" width="34.8" height="45.8" filter="url(#tw)" opacity="0.08"/>
</g>
<g clip-path="url(#c25)"><rect x="513.0" y="407.6" width="35.0" height="51.3" fill="#121012"/>
<g filter="url(#bl)">
<ellipse cx="542.8" cy="423.0" rx="7.0" ry="15.4" fill="#1c1b1e"/>
<ellipse cx="534.0" cy="416.8" rx="9.1" ry="7.7" fill="#68482c"/>
<ellipse cx="527.7" cy="428.1" rx="7.7" ry="11.8" fill="#cc997f"/>
</g>
<g filter="url(#bs)">
<ellipse cx="521.8" cy="430.7" rx="1.8" ry="1.5" fill="#901b28"/>
<ellipse cx="524.7" cy="423.0" rx="1.8" ry="2.1" fill="#382f28"/>
<ellipse cx="529.3" cy="423.0" rx="1.8" ry="2.1" fill="#382f28"/>
</g>
<g filter="url(#bl)">
<ellipse cx="528.8" cy="443.5" rx="3.5" ry="7.7" fill="#ab7653"/>
<ellipse cx="525.2" cy="454.8" rx="14.0" ry="7.7" fill="#b47f5d"/>
<ellipse cx="541.7" cy="446.1" rx="6.3" ry="10.3" fill="#0b0b11"/>
</g>
<g filter="url(#bs)">
<ellipse cx="538.2" cy="430.7" rx="2.1" ry="4.1" fill="#c79076"/>
</g>
</g>
<g clip-path="url(#c26)"><rect x="548.0" y="407.6" width="36.3" height="51.3" fill="#104644"/>
<g filter="url(#bl)">
<ellipse cx="551.6" cy="417.9" rx="5.4" ry="15.4" fill="#135753"/>
<ellipse cx="566.1" cy="414.3" rx="13.1" ry="8.2" fill="#1c100b"/>
<ellipse cx="566.1" cy="429.1" rx="9.8" ry="12.8" fill="#be6637"/>
</g>
<g filter="url(#bs)">
<ellipse cx="561.1" cy="423.0" rx="3.8" ry="2.6" fill="#482a1b"/>
<ellipse cx="571.1" cy="423.0" rx="3.8" ry="2.6" fill="#482a1b"/>
<ellipse cx="566.1" cy="432.2" rx="2.9" ry="1.8" fill="#38a299"/>
</g>
<g filter="url(#bl)">
<ellipse cx="566.1" cy="446.1" rx="6.5" ry="10.3" fill="#b46637"/>
<ellipse cx="553.1" cy="444.5" rx="3.6" ry="15.4" fill="#be9066"/>
<ellipse cx="579.6" cy="444.5" rx="3.6" ry="15.4" fill="#ab7f5d"/>
<ellipse cx="566.1" cy="457.4" rx="14.5" ry="5.1" fill="#902f14"/>
<ellipse cx="558.9" cy="451.2" rx="2.9" ry="5.1" fill="#79250e"/>
</g>
</g>
<g clip-path="url(#c27)"><rect x="584.3" y="407.6" width="33.8" height="51.3" fill="#0e0b0c"/>
<g filter="url(#bl)">
<ellipse cx="600.2" cy="413.8" rx="10.1" ry="6.2" fill="#0a0709"/>
<ellipse cx="600.2" cy="424.5" rx="8.1" ry="13.3" fill="#d0a790"/>
</g>
<g filter="url(#bs)">
<ellipse cx="596.5" cy="422.0" rx="2.8" ry="2.1" fill="#382a2c"/>
<ellipse cx="603.9" cy="422.0" rx="2.8" ry="2.1" fill="#382a2c"/>
<ellipse cx="600.2" cy="430.7" rx="2.4" ry="1.8" fill="#79111b"/>
</g>
<g filter="url(#bl)">
<ellipse cx="589.4" cy="435.8" rx="5.1" ry="20.5" fill="#090607"/>
<ellipse cx="611.3" cy="423.0" rx="4.1" ry="12.8" fill="#0a0709"/>
<ellipse cx="599.5" cy="449.7" rx="4.1" ry="10.3" fill="#a2765d"/>
<ellipse cx="609.6" cy="444.5" rx="6.8" ry="10.3" fill="#681011"/>
</g>
<g filter="url(#bs)">
<ellipse cx="594.4" cy="453.8" rx="6.1" ry="2.6" fill="#484244"/>
<ellipse cx="616.4" cy="420.4" rx="1.4" ry="12.8" fill="#381114"/>
</g>
</g>
<g clip-path="url(#c28)"><rect x="618.1" y="407.6" width="35.5" height="51.3" fill="#35282a"/>
<g filter="url(#bl)">
<ellipse cx="635.9" cy="409.1" rx="21.3" ry="5.1" fill="#1c1414"/>
<ellipse cx="648.3" cy="438.4" rx="7.1" ry="20.5" fill="#483838"/>
<ellipse cx="619.9" cy="433.2" rx="2.8" ry="15.4" fill="#1c1416"/>
<ellipse cx="634.1" cy="417.9" rx="14.2" ry="10.3" fill="#57331b"/>
<ellipse cx="625.2" cy="425.6" rx="5.3" ry="7.7" fill="#482814"/>
<ellipse cx="635.9" cy="418.9" rx="7.1" ry="5.1" fill="#8a374d"/>
</g>
<rect x="618.1" y="407.6" width="35.5" height="51.3" filter="url(#tx)" opacity="0.35"/>
<rect x="618.1" y="407.6" width="35.5" height="51.3" filter="url(#tw)" opacity="0.1"/>
<g filter="url(#bl)">
<ellipse cx="640.1" cy="431.7" rx="7.1" ry="11.8" fill="#be8866"/>
</g>
<g filter="url(#bs)">
<ellipse cx="643.0" cy="435.8" rx="2.1" ry="1.8" fill="#38172f"/>
</g>
<g filter="url(#bl)">
<ellipse cx="635.9" cy="443.5" rx="2.8" ry="6.2" fill="#a27255"/>
<ellipse cx="630.5" cy="452.7" rx="12.4" ry="10.3" fill="#b47b66"/>
<ellipse cx="628.8" cy="451.2" rx="7.1" ry="5.1" fill="#993e5d" opacity="0.6"/>
</g>
</g>
<g clip-path="url(#c29)"><rect x="653.6" y="407.6" width="34.5" height="51.3" fill="#2a64bb"/>
<g filter="url(#bl)">
<ellipse cx="684.6" cy="417.9" rx="5.2" ry="12.8" fill="#3876cc"/>
<ellipse cx="657.1" cy="433.2" rx="4.1" ry="15.4" fill="#2055ab"/>
<ellipse cx="670.9" cy="413.8" rx="11.0" ry="7.2" fill="#100e0e"/>
<ellipse cx="670.9" cy="429.1" rx="8.6" ry="12.8" fill="#cc957b"/>
</g>
<g filter="url(#bs)">
<ellipse cx="666.7" cy="423.0" rx="3.2" ry="2.1" fill="#2a6890"/>
<ellipse cx="675.0" cy="423.0" rx="3.2" ry="2.1" fill="#2a6890"/>
<ellipse cx="670.9" cy="434.3" rx="2.8" ry="1.8" fill="#ab1117"/>
</g>
<g filter="url(#bl)">
<ellipse cx="670.9" cy="444.5" rx="6.9" ry="6.2" fill="#c7906e"/>
<ellipse cx="670.9" cy="454.8" rx="19.0" ry="7.7" fill="#be5721"/>
<ellipse cx="660.5" cy="451.2" rx="4.1" ry="6.2" fill="#be9046"/>
<ellipse cx="681.2" cy="440.9" rx="2.8" ry="7.7" fill="#ab7f4d"/>
<ellipse cx="677.8" cy="456.3" rx="5.2" ry="4.1" fill="#a22114"/>
<ellipse cx="664.0" cy="457.4" rx="4.1" ry="3.1" fill="#ab281b"/>
</g>
</g>
<g clip-path="url(#c30)"><rect x="688.1" y="407.6" width="35.9" height="51.3" fill="#303732"/>
<g filter="url(#bl)">
<ellipse cx="698.9" cy="428.1" rx="10.8" ry="20.5" fill="#3c443e"/>
<ellipse cx="706.0" cy="458.9" rx="28.7" ry="5.1" fill="#373f39"/>
<ellipse cx="713.9" cy="423.0" rx="3.6" ry="6.7" fill="#a28161"/>
</g>
<g filter="url(#bs)">
<ellipse cx="713.2" cy="412.7" rx="1.8" ry="3.1" fill="#947159"/>
</g>
<g filter="url(#bl)">
<ellipse cx="713.9" cy="443.5" rx="5.4" ry="11.3" fill="#0d0d0d"/>
<ellipse cx="707.8" cy="444.5" rx="2.9" ry="9.2" fill="#0f0f0f"/>
</g>
<g filter="url(#bs)">
<ellipse cx="706.0" cy="429.1" rx="2.5" ry="1.1" fill="#836149"/>
<ellipse cx="719.3" cy="428.1" rx="0.8" ry="5.6" fill="#836149"/>
<ellipse cx="713.2" cy="456.3" rx="7.2" ry="1.5" fill="#212622"/>
</g>
</g>
</g></svg>
<!-- zoom controls -->
<svg class="a" style="left:465px;top:727px;" width="16" height="16" viewBox="0 0 16 16"><circle cx="8" cy="8.2" r="7" fill="#b0b0b0"/><rect x="4" y="7.3" width="8" height="1.8" fill="#282828"/></svg>
<svg class="a" style="left:544px;top:727px;" width="16" height="16" viewBox="0 0 16 16"><circle cx="7.8" cy="8.2" r="7" fill="#b0b0b0"/><rect x="3.8" y="7.3" width="8" height="1.8" fill="#282828"/><rect x="6.9" y="4.2" width="1.8" height="8" fill="#282828"/></svg>

<!-- RIGHT: Ustawienia pliku -->
<div class="fs" style="left:759px;top:45px;width:259px;height:94px;"></div>
<div class="gap" style="left:768px;top:44px;width:85px;"></div>
<div class="inp" style="left:848px;top:62.5px;width:124.5px;height:28px;"></div>
<svg class="a" style="left:952px;top:71px;" width="12" height="10" viewBox="0 0 12 10"><path d="M2.1 3.1 L5.8 7 L9.5 3.1" stroke="#dedede" stroke-width="1.6" fill="none" stroke-linecap="round" stroke-linejoin="round"/></svg>
<div class="inp" style="left:848px;top:97px;width:124.5px;height:28px;"></div>
<svg class="a" style="left:952px;top:106px;" width="12" height="10" viewBox="0 0 12 10"><path d="M2.1 3.1 L5.8 7 L9.5 3.1" stroke="#dedede" stroke-width="1.6" fill="none" stroke-linecap="round" stroke-linejoin="round"/></svg>

<!-- RIGHT: Rozmiar obrazu -->
<div class="fs" style="left:759px;top:152px;width:259px;height:168.5px;"></div>
<div class="gap" style="left:768px;top:151px;width:85px;"></div>

<!-- RIGHT: Rozmiar obszaru roboczego -->
<div class="fs" style="left:759px;top:334px;width:259px;height:115px;"></div>
<div class="gap" style="left:768px;top:333px;width:143px;"></div>
<div class="inp" style="left:848px;top:352px;width:125px;height:28px;"></div>
<div class="inp" style="left:848px;top:386px;width:125px;height:28px;"></div>
<div class="a" style="left:944.6px;top:420.8px;width:58.6px;height:19.6px;background:#444444;border-radius:3px;"></div>

<!-- RIGHT: Metadane -->
<div class="fs" style="left:759px;top:462px;width:259px;height:73.5px;"></div>
<div class="gap" style="left:768px;top:460.5px;width:58px;"></div>
<svg class="a" style="left:772px;top:480px;" width="14" height="14" viewBox="0 0 14 14"><circle cx="7.2" cy="7" r="6.15" fill="#2f8ff2"/><circle cx="7.2" cy="7" r="1.7" fill="#474747"/></svg>
<svg class="a" style="left:772px;top:507px;" width="14" height="14" viewBox="0 0 14 14"><circle cx="7.2" cy="7.2" r="5.3" fill="none" stroke="#8c8c8c" stroke-width="1.4"/></svg>

<!-- RIGHT: Przestrzen kolorow -->
<div class="fs" style="left:759px;top:550px;width:259px;height:69px;"></div>
<div class="gap" style="left:768px;top:548.5px;width:101px;"></div>
<div class="cb" style="left:774.3px;top:567.6px;"><svg width="13" height="13" viewBox="0 0 13 13"><path d="M3.3 6.7 L5.6 9 L9.7 4.3" stroke="#2c2c2c" stroke-width="1.55" fill="none" stroke-linecap="round" stroke-linejoin="round"/></svg></div>
<div class="cb" style="left:774.3px;top:591.6px;"><svg width="13" height="13" viewBox="0 0 13 13"><path d="M3.3 6.7 L5.6 9 L9.7 4.3" stroke="#2c2c2c" stroke-width="1.55" fill="none" stroke-linecap="round" stroke-linejoin="round"/></svg></div>

<!-- buttons -->
<div class="a" style="left:873.5px;top:720.5px;width:62px;height:27px;border:2px solid #dcdcdc;border-radius:14px;"></div>
<div class="a" style="left:945px;top:720.4px;width:71.6px;height:27.4px;background:#1473e6;border-radius:14px;"></div>

<!-- dropdown -->
<div class="a" style="left:846px;top:122px;width:129.5px;height:205px;background:#555555;border:1px solid #484848;"></div>
<div class="a" style="left:849.3px;top:126.2px;width:122.5px;height:197.3px;background:#252525;border-radius:4px;"></div>
<div class="a" style="left:849.3px;top:266px;width:122.5px;height:27.4px;background:#333333;"></div>
<svg class="a" style="left:952px;top:274px;" width="12" height="12" viewBox="0 0 12 12"><path d="M1.8 6.6 L4.4 9.2 L9.8 2.9" stroke="#2f8ff2" stroke-width="1.7" fill="none" stroke-linecap="round" stroke-linejoin="round"/></svg>

<span class="t" style="left:8.80px;top:5.73px;font-size:11.3px;transform:scaleX(0.8809);color:#000;">Eksportuj jako</span>
<span class="t" style="left:23.20px;top:40.69px;font-size:11px;transform:scaleX(0.8990);color:#d2d2d2;">Skaluj wszystko</span>
<span class="t" style="left:25.90px;top:62.69px;font-size:11px;transform:scaleX(0.9451);color:#d2d2d2;">Rozmiar:</span>
<span class="t" style="left:101.30px;top:62.69px;font-size:11px;transform:scaleX(0.9179);color:#d2d2d2;">Przyrostek:</span>
<span class="t" style="left:39.60px;top:96.79px;font-size:11px;transform:scaleX(0.9032);color:#d2d2d2;">1x</span>
<span class="t" style="left:38.30px;top:156.69px;font-size:11px;transform:scaleX(0.9292);color:#d2d2d2;">Wybierz wszystkie</span>
<span class="t" style="left:86.70px;top:196.39px;font-size:11px;transform:scaleX(0.9240);color:#d2d2d2;">Bez nazwy-2</span>
<span class="t" style="left:86.70px;top:211.91px;font-size:10.5px;transform:scaleX(0.7247);color:#d2d2d2;">JPG</span>
<span class="t" style="left:142.20px;top:211.91px;font-size:10.5px;transform:scaleX(0.8678);color:#d2d2d2;">1500 x 500</span>
<span class="t" style="left:224.80px;top:211.91px;font-size:10.5px;transform:scaleX(0.8101);color:#d2d2d2;">310,6 KB</span>
<span class="t sb" style="left:281.30px;top:39.54px;font-size:12px;transform:scaleX(0.9921);color:#f4f4f4;">Podgląd</span>
<span class="t" style="left:345.60px;top:39.54px;font-size:12px;transform:scaleX(0.9599);color:#b4b4b4;">2 na ekranie</span>
<span class="t" style="left:496.30px;top:730.29px;font-size:11px;transform:scaleX(0.9112);color:#d2d2d2;">33.33%</span>
<span class="t" style="left:773.30px;top:40.99px;font-size:11px;transform:scaleX(0.9247);color:#d2d2d2;">Ustawienia pliku</span>
<span class="t" style="left:806.00px;top:71.89px;font-size:11px;transform:scaleX(0.9365);color:#d2d2d2;">Format:</span>
<span class="t" style="left:859.40px;top:71.89px;font-size:11px;transform:scaleX(0.7708);color:#d2d2d2;">JPG</span>
<span class="t" style="left:809.90px;top:105.79px;font-size:11px;transform:scaleX(0.8473);color:#d2d2d2;">Jakość:</span>
<span class="t" style="left:858.90px;top:105.89px;font-size:11px;transform:scaleX(0.9291);color:#d2d2d2;">Doskonała</span>
<span class="t" style="left:859.70px;top:138.39px;font-size:11px;transform:scaleX(0.9089);color:#cdcdcd;">Bardzo niska</span>
<span class="t" style="left:859.70px;top:165.79px;font-size:11px;transform:scaleX(0.8759);color:#cdcdcd;">Niska</span>
<span class="t" style="left:859.70px;top:193.09px;font-size:11px;transform:scaleX(0.9222);color:#cdcdcd;">Dostateczna</span>
<span class="t" style="left:859.70px;top:220.29px;font-size:11px;transform:scaleX(0.9410);color:#cdcdcd;">Dobra</span>
<span class="t" style="left:859.70px;top:247.69px;font-size:11px;transform:scaleX(0.9463);color:#cdcdcd;">Bardzo dobra</span>
<span class="t" style="left:859.70px;top:274.69px;font-size:11px;transform:scaleX(0.9214);color:#cdcdcd;">Doskonała</span>
<span class="t" style="left:859.70px;top:302.09px;font-size:11px;transform:scaleX(0.8891);color:#cdcdcd;">Świetna</span>
<span class="t" style="left:773.20px;top:148.69px;font-size:11px;transform:scaleX(0.9351);color:#d2d2d2;">Rozmiar obrazu</span>
<span class="t" style="left:792.70px;top:179.59px;font-size:11px;transform:scaleX(0.8912);color:#d2d2d2;">Szerokość:</span>
<span class="t" style="left:793.70px;top:213.39px;font-size:11px;transform:scaleX(0.8949);color:#d2d2d2;">Wysokość:</span>
<span class="t" style="left:815.70px;top:247.69px;font-size:11px;transform:scaleX(0.8339);color:#d2d2d2;">Skala:</span>
<span class="t" style="left:799.10px;top:276.79px;font-size:11px;transform:scaleX(0.9177);color:#d2d2d2;">Ponowne</span>
<span class="t" style="left:779.50px;top:293.59px;font-size:11px;transform:scaleX(0.9429);color:#d2d2d2;">próbkowanie:</span>
<span class="t" style="left:983.60px;top:179.59px;font-size:11px;transform:scaleX(0.8530);color:#d2d2d2;">piks.</span>
<span class="t" style="left:983.60px;top:213.39px;font-size:11px;transform:scaleX(0.8530);color:#d2d2d2;">piks.</span>
<span class="t" style="left:773.00px;top:330.29px;font-size:11px;transform:scaleX(0.9536);color:#d2d2d2;">Rozmiar obszaru roboczego</span>
<span class="t" style="left:792.80px;top:360.69px;font-size:11px;transform:scaleX(0.8949);color:#d2d2d2;">Szerokość:</span>
<span class="t sb" style="left:862.40px;top:360.69px;font-size:11px;transform:scaleX(0.9598);color:#e6e6e6;">1500</span>
<span class="t" style="left:983.60px;top:360.69px;font-size:11px;transform:scaleX(0.8530);color:#d2d2d2;">piks.</span>
<span class="t" style="left:793.80px;top:394.49px;font-size:11px;transform:scaleX(0.8987);color:#d2d2d2;">Wysokość:</span>
<span class="t sb" style="left:862.40px;top:394.49px;font-size:11px;transform:scaleX(0.9750);color:#e6e6e6;">500</span>
<span class="t" style="left:983.60px;top:394.49px;font-size:11px;transform:scaleX(0.8530);color:#d2d2d2;">piks.</span>
<span class="t" style="left:955.50px;top:424.39px;font-size:11px;transform:scaleX(0.9460);color:#727272;">Wyzeruj</span>
<span class="t" style="left:773.00px;top:457.99px;font-size:11px;transform:scaleX(0.9441);color:#d2d2d2;">Metadane</span>
<span class="t" style="left:793.80px;top:481.99px;font-size:11px;transform:scaleX(0.9105);color:#d2d2d2;">Brak</span>
<span class="t" style="left:793.80px;top:509.29px;font-size:11px;transform:scaleX(0.9366);color:#d2d2d2;">Prawa autorskie i kontakt</span>
<span class="t" style="left:773.00px;top:545.29px;font-size:11px;transform:scaleX(0.9525);color:#d2d2d2;">Przestrzeń kolorów</span>
<span class="t" style="left:795.90px;top:568.89px;font-size:11px;transform:scaleX(0.9088);color:#d2d2d2;">Konwertuj na sRGB</span>
<span class="t" style="left:795.90px;top:592.89px;font-size:11px;transform:scaleX(0.9496);color:#d2d2d2;">Osadź profil koloru</span>
<span class="t" style="left:759.30px;top:629.79px;font-size:11px;transform:scaleX(0.9442);color:#d2d2d2;">Więcej informacji</span>
<span class="t" style="left:840.60px;top:629.79px;font-size:11px;transform:scaleX(0.9543);color:#4693e8;">opcje eksportu.</span>
<span class="t" style="left:760.20px;top:733.49px;font-size:11px;transform:scaleX(0.8943);color:#d2d2d2;">v5.5.5</span>
<span class="t" style="left:889.90px;top:728.59px;font-size:11px;transform:scaleX(0.9615);color:#e0e0e0;">Anuluj</span>
<span class="t" style="left:958.90px;top:728.59px;font-size:11px;transform:scaleX(0.9464);color:#ffffff;">Eksportuj</span>
</body>
</html>
